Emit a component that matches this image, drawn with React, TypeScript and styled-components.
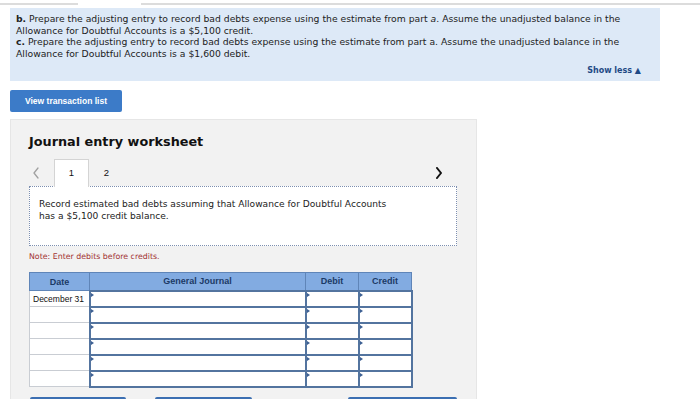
import styled, { createGlobalStyle } from 'styled-components';

const GlobalStyle = createGlobalStyle`
  html, body {
    margin: 0;
    padding: 0;
    background: #ffffff;
    overflow: hidden;
  }
  body {
    font-family: 'DejaVu Sans', Verdana, sans-serif;
    color: #222;
  }
`;

const ROWS = ['December 31', '', '', '', '', ''];

function Chevron({ dir, color, weight }: { dir: 'left' | 'right'; color: string; weight: number }) {
  const d = dir === 'left' ? 'M6 1 L2 6 L6 11' : 'M2 1 L6 6 L2 11';
  return (
    <svg width="8" height="12" viewBox="0 0 8 12">
      <path d={d} fill="none" stroke={color} strokeWidth={weight} strokeLinecap="round" strokeLinejoin="round" />
    </svg>
  );
}

export default function App() {
  return (
    <Page>
      <GlobalStyle />
      <TopRule>
        <RuleSegment $width="78px" />
        <RuleGap />
        <RuleSegment $width="auto" $grow />
      </TopRule>

      <InfoPanel>
        <InfoText>
          <b>b.</b> Prepare the adjusting entry to record bad debts expense using the estimate from part <i>a</i>. Assume the
          unadjusted balance in the Allowance for Doubtful Accounts is a $5,100 credit.
          <br />
          <b>c.</b> Prepare the adjusting entry to record bad debts expense using the estimate from part a. Assume the
          unadjusted balance in the Allowance for Doubtful Accounts is a $1,600 debit.
        </InfoText>
        <ShowLess>Show less ▲</ShowLess>
      </InfoPanel>

      <BlueButton>View transaction list</BlueButton>

      <Worksheet>
        <Title>Journal entry worksheet</Title>
        <TabRow>
          <Arrow>
            <Chevron dir="left" color="#a0a0a0" weight={1.3} />
          </Arrow>
          <Tab $active>1</Tab>
          <Tab>2</Tab>
          <TabSpacer />
          <Arrow>
            <Chevron dir="right" color="#111" weight={2} />
          </Arrow>
        </TabRow>
        <TaskBox>
          Record estimated bad debts assuming that Allowance for Doubtful Accounts
          <br />
          has a $5,100 credit balance.
        </TaskBox>
        <Note>Note: Enter debits before credits.</Note>

        <Journal>
          <thead>
            <tr>
              <HeadCell $w={60}>Date</HeadCell>
              <HeadCell $w={216}>General Journal</HeadCell>
              <HeadCell $w={53}>Debit</HeadCell>
              <HeadCell $w={53}>Credit</HeadCell>
            </tr>
          </thead>
          <tbody>
            {ROWS.map((date, i) => (
              <JournalRow key={i}>
                <DateCell>{date}</DateCell>
                <InputCell />
                <InputCell />
                <InputCell />
              </JournalRow>
            ))}
          </tbody>
        </Journal>

        <ButtonRow>
          <ButtonGroup>
            <FooterButton $w={96} />
            <FooterButton $w={97} />
          </ButtonGroup>
          <FooterButton $w={109} />
        </ButtonRow>
      </Worksheet>
    </Page>
  );
}

const Page = styled.div`
  width: 700px;
  height: 399px;
  overflow: hidden;
`;

const TopRule = styled.div`
  display: flex;
  height: 2px;
  margin-top: 3px;
  margin-bottom: 3px;
`;

const RuleSegment = styled.div<{ $width: string; $grow?: boolean }>`
  width: ${(p) => p.$width};
  flex: ${(p) => (p.$grow ? 1 : 'none')};
  background: #dcdcdc;
`;

const RuleGap = styled.div`
  width: 63px;
`;

const InfoPanel = styled.div`
  margin: 0 40px 0 10px;
  padding: 5px 19px 5px 6px;
  background: #dde9f7;
  display: flex;
  flex-direction: column;
`;

const InfoText = styled.div`
  font-size: 9.25px;
  line-height: 11.5px;
  color: #222;
  b {
    font-weight: bold;
  }
`;

const ShowLess = styled.div`
  align-self: flex-end;
  margin-top: 6px;
  font-size: 8px;
  line-height: 11px;
  font-weight: bold;
  color: #1f4a85;
`;

const BlueButton = styled.div`
  margin: 9px 0 0 10px;
  width: 112px;
  height: 22px;
  box-sizing: border-box;
  border-radius: 2px;
  background: #3c7bc8;
  color: #fff;
  font-family: 'Liberation Sans', Arial, sans-serif;
  font-weight: bold;
  font-size: 8.5px;
  display: flex;
  align-items: center;
  justify-content: center;
`;

const Worksheet = styled.div`
  margin: 7px 0 0 10px;
  width: 467px;
  height: 300px;
  box-sizing: border-box;
  background: #f2f2f2;
  border: 1px solid #e6e6e6;
  padding: 13px 19px 0 18px;
`;

const Title = styled.div`
  font-size: 12.8px;
  font-weight: bold;
  color: #111;
  line-height: 18px;
`;

const TabRow = styled.div`
  display: flex;
  align-items: stretch;
  margin-top: 8px;
  height: 27px;
`;

const Arrow = styled.div`
  width: 25px;
  display: flex;
  align-items: center;
  padding-left: 3px;
  box-sizing: border-box;
`;

const Tab = styled.div<{ $active?: boolean }>`
  width: 35px;
  box-sizing: border-box;
  display: flex;
  align-items: center;
  justify-content: center;
  padding-bottom: 2px;
  font-family: 'Liberation Sans', Arial, sans-serif;
  font-size: 9.5px;
  color: #111;
  background: ${(p) => (p.$active ? '#ffffff' : 'transparent')};
  border: 1px solid ${(p) => (p.$active ? '#d4d4d4' : 'transparent')};
  border-bottom: none;
  margin-bottom: -1px;
  position: relative;
  z-index: 1;
`;

const TabSpacer = styled.div`
  flex: 1;
`;

const TaskBox = styled.div`
  height: 60px;
  box-sizing: border-box;
  background: #fff;
  border: 1px dotted #7d8fb0;
  padding: 11px 9px 0 9px;
  font-size: 9.1px;
  line-height: 12px;
  color: #222;
`;

const Note = styled.div`
  margin-top: 6px;
  font-size: 7.85px;
  line-height: 10px;
  color: #a23232;
`;

const Journal = styled.table`
  margin-top: 10px;
  border-collapse: collapse;
  font-family: 'Liberation Sans', Arial, sans-serif;
  font-size: 8.5px;
`;

const HeadCell = styled.th<{ $w: number }>`
  width: ${(p) => p.$w}px;
  height: 18px;
  padding: 0;
  box-sizing: border-box;
  background: #82abe1;
  color: #1c3a66;
  font-size: 9px;
  font-weight: bold;
  text-align: center;
  border: 1px solid #5f85b8;
`;

const JournalRow = styled.tr`
  height: 16px;
`;

const DateCell = styled.td`
  height: 12px;
  padding: 0 0 0 3px;
  line-height: 12px;
  background: #fff;
  border: 1px solid #c9cdd3;
  color: #111;
  white-space: nowrap;
`;

const InputCell = styled.td`
  position: relative;
  height: 12px;
  padding: 0;
  line-height: 12px;
  background: #fff;
  border: 2px solid #53749f;
  &::before {
    content: '';
    position: absolute;
    left: 0;
    top: 1px;
    border-left: 3px solid #3c5f92;
    border-top: 2px solid transparent;
    border-bottom: 2px solid transparent;
  }
`;

const ButtonRow = styled.div`
  display: flex;
  justify-content: space-between;
  margin-top: 9px;
  padding-left: 1px;
`;

const ButtonGroup = styled.div`
  display: flex;
  gap: 29px;
`;

const FooterButton = styled.div<{ $w: number }>`
  width: ${(p) => p.$w}px;
  flex: none;
  height: 22px;
  border-radius: 2px;
  background: #3c6fb2;
`;
